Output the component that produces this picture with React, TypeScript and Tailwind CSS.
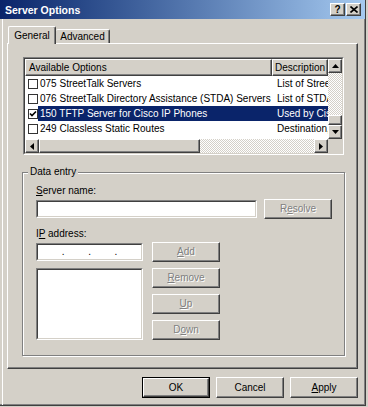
import type { ReactNode } from "react";

const raised =
  "border border-t-white border-l-white border-r-[#404040] border-b-[#404040] shadow-[inset_-1px_-1px_0_#808080] bg-[#d4d0c8]";

const dither =
  "[background-image:repeating-conic-gradient(#d4d0c8_0%_25%,#ffffff_0%_50%)] [background-size:2px_2px]";

function Sunken({ className = "", children }: { className?: string; children?: ReactNode }) {
  return (
    <div className={`border border-t-[#808080] border-l-[#808080] border-r-white border-b-white ${className}`}>
      <div className="h-full w-full border border-t-[#404040] border-l-[#404040] border-r-[#d4d0c8] border-b-[#d4d0c8] bg-white">
        {children}
      </div>
    </div>
  );
}

function Button({
  children,
  disabled,
  primary,
  className = "",
}: {
  children: ReactNode;
  disabled?: boolean;
  primary?: boolean;
  className?: string;
}) {
  const face = (
    <div
      className={`${raised} flex h-full w-full items-center justify-center ${
        disabled ? "text-[#808080] [text-shadow:1px_1px_0_#fff]" : "text-black"
      }`}
    >
      <span>{children}</span>
    </div>
  );
  if (primary) return <div className={`border border-black ${className}`}>{face}</div>;
  return <div className={className}>{face}</div>;
}

function Arrow({ dir }: { dir: "up" | "down" | "left" | "right" }) {
  const pts = {
    up: "3.5,0 7,4 0,4",
    down: "0,0 7,0 3.5,4",
    left: "4,0 4,7 0,3.5",
    right: "0,0 0,7 4,3.5",
  }[dir];
  const vertical = dir === "up" || dir === "down";
  return (
    <div className={`${raised} flex h-[14px] w-[14px] shrink-0 items-center justify-center`}>
      <svg width={vertical ? 7 : 4} height={vertical ? 4 : 7} viewBox={vertical ? "0 0 7 4" : "0 0 4 7"}>
        <polygon points={pts} fill="#000" />
      </svg>
    </div>
  );
}

const rows = [
  { name: "075 StreetTalk Servers", desc: "List of StreetTalk servers", checked: false },
  { name: "076 StreetTalk Directory Assistance (STDA) Servers", desc: "List of STDA servers", checked: false },
  { name: "150 TFTP Server for Cisco IP Phones", desc: "Used by Cisco IP phones", checked: true, selected: true },
  { name: "249 Classless Static Routes", desc: "Destination, mask and router", checked: false },
];

export default function App() {
  return (
    <div className="h-[407px] w-[368px] overflow-hidden bg-[#d4d0c8] font-['Liberation_Sans',Arial,sans-serif] text-[10px] leading-[12px] text-black">
      <div className="flex h-[406px] w-[366px] flex-col border-r border-b border-r-[#404040] border-b-[#404040] shadow-[inset_-1px_-1px_0_#808080]">
        {/* title bar */}
        <div className="flex h-[19px] shrink-0 items-center bg-linear-to-r from-[#0a246a] to-[#a6caf0] pl-[5px] pr-[4px]">
          <span className="text-[10.5px] font-bold text-white">Server Options</span>
          <div className="ml-auto flex gap-[1px]">
            <div className={`${raised} flex h-[13px] w-[15px] items-center justify-center text-[10px] font-bold leading-none`}>
              ?
            </div>
            <div className={`${raised} flex h-[13px] w-[15px] items-center justify-center`}>
              <svg width="8" height="7" viewBox="0 0 8 7">
                <path d="M0.5 0.5 L7.5 6.5 M7.5 0.5 L0.5 6.5" stroke="#000" strokeWidth="1.6" />
              </svg>
            </div>
          </div>
        </div>

        <div className="ml-[2px] flex flex-1 flex-col border-l border-l-white">
          {/* tabs */}
          <div className="ml-[5px] mt-[7px] flex h-[17px] items-end">
            <div className="relative z-10 -mb-[1px] flex h-[18px] w-[48px] items-center justify-center rounded-t-[2px] border-t border-l border-r border-t-white border-l-white border-r-[#404040] bg-[#d4d0c8] shadow-[inset_-1px_0_0_#808080]">
              General
            </div>
            <div className="flex h-[14px] w-[54px] items-center justify-center rounded-t-[2px] border-t border-r border-t-white border-r-[#404040] shadow-[inset_-1px_0_0_#808080]">
              Advanced
            </div>
          </div>

          {/* tab panel */}
          <div className={`${raised} ml-[4px] h-[326px] w-[351px]`}>
            <Sunken className="ml-[15px] mt-[13px] h-[98px] w-[321px]">
              <div className="flex h-[80px]">
                <div className="w-[303px] overflow-hidden">
                  <div className="flex h-[17px]">
                    <div className={`${raised} flex w-[247px] shrink-0 items-center pl-[3px]`}>Available Options</div>
                    <div className={`${raised} flex w-[56px] shrink-0 items-center overflow-hidden whitespace-nowrap pl-[2px]`}>
                      Description
                    </div>
                  </div>
                  {rows.map((r) => (
                    <div key={r.name} className="flex h-[15px] items-center">
                      <div className="ml-[3px] flex h-[10px] w-[10px] shrink-0 items-center justify-center border border-[#333] bg-white">
                        {r.checked && (
                          <svg width="8" height="8" viewBox="0 0 8 8">
                            <polyline points="1,3.5 3,5.5 7,1.5" fill="none" stroke="#000" strokeWidth="1.6" />
                          </svg>
                        )}
                      </div>
                      <div
                        className={`flex h-[15px] w-[290px] shrink-0 items-center whitespace-nowrap ${
                          r.selected ? "bg-[#0a246a] text-white" : ""
                        }`}
                      >
                        <div className="w-[234px] shrink-0 overflow-hidden pl-[2px]">{r.name}</div>
                        <div className="w-[56px] shrink-0 overflow-hidden pl-[5px]">{r.desc}</div>
                      </div>
                    </div>
                  ))}
                </div>
                <div className="flex w-[14px] flex-col">
                  <Arrow dir="up" />
                  <div className={`flex-1 ${dither}`} />
                  <div className={`${raised} h-[10px]`} />
                  <Arrow dir="down" />
                </div>
              </div>
              <div className="flex h-[14px]">
                <Arrow dir="left" />
                <div className={`${raised} w-[161px] shrink-0`} />
                <div className={`flex-1 ${dither}`} />
                <Arrow dir="right" />
                <div className="w-[14px] shrink-0 bg-[#d4d0c8]" />
              </div>
            </Sunken>

            {/* data entry group */}
            <div className="relative ml-[14px] mt-[17px] h-[184px] w-[323px] border border-[#808080] pl-[13px] pt-[12px] shadow-[inset_1px_1px_0_#fff,1px_1px_0_#fff]">
              <span className="absolute -top-[7px] left-[5px] bg-[#d4d0c8] px-[2px]">Data entry</span>
              <div>
                <u>S</u>erver name:
              </div>
              <div className="mt-[2px] flex h-[20px] items-center">
                <Sunken className="h-[18px] w-[221px]" />
                <Button disabled className="ml-[7px] h-[20px] w-[68px]">
                  R<u>e</u>solve
                </Button>
              </div>
              <div className="mt-[9px]">
                I<u>P</u> address:
              </div>
              <div className="mt-[2px] flex gap-[9px]">
                <div className="flex w-[107px] flex-col pt-[1px]">
                  <Sunken className="h-[18px] w-[107px]">
                    <div className="flex h-full items-center">
                      <span className="flex-1" />
                      <span>.</span>
                      <span className="flex-1" />
                      <span>.</span>
                      <span className="flex-1" />
                      <span>.</span>
                      <span className="flex-1" />
                    </div>
                  </Sunken>
                  <Sunken className="mt-[7px] h-[72px] w-[107px]" />
                </div>
                <div className="flex flex-col gap-[6px]">
                  <Button disabled className="h-[20px] w-[68px]">
                    <u>A</u>dd
                  </Button>
                  <Button disabled className="h-[20px] w-[68px]">
                    <u>R</u>emove
                  </Button>
                  <Button disabled className="h-[20px] w-[68px]">
                    <u>U</u>p
                  </Button>
                  <Button disabled className="h-[20px] w-[68px]">
                    D<u>o</u>wn
                  </Button>
                </div>
              </div>
            </div>
          </div>

          {/* dialog buttons */}
          <div className="ml-[4px] mt-[8px] flex w-[351px] justify-end gap-[6px]">
            <Button primary className="h-[21px] w-[68px]">
              OK
            </Button>
            <Button className="h-[21px] w-[68px]">Cancel</Button>
            <Button className="h-[21px] w-[68px]">
              <u>A</u>pply
            </Button>
          </div>
        </div>
      </div>
    </div>
  );
}
